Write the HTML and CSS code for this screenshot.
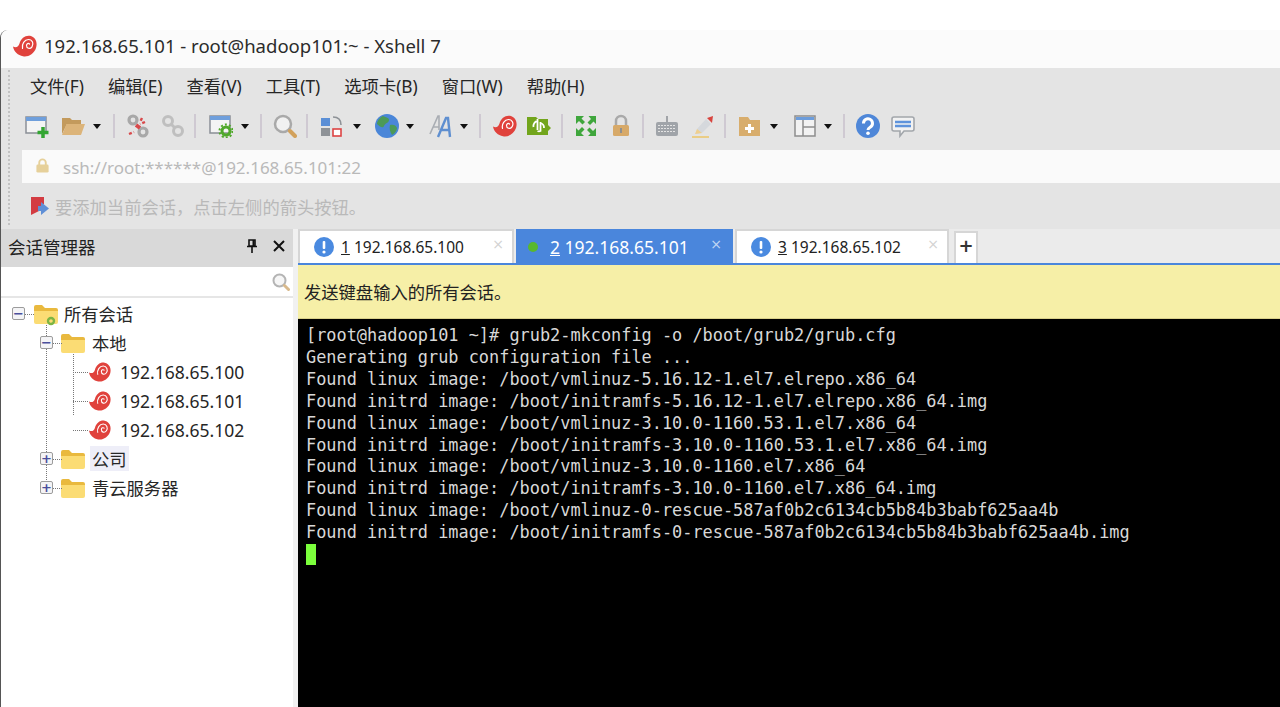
FILE: index.html
```html
<!DOCTYPE html>
<html lang="zh-CN">
<head>
<meta charset="utf-8">
<title>Xshell 7</title>
<link rel="stylesheet" href="styles.css">
</head>
<body>
<svg class="defs" width="0" height="0" aria-hidden="true">
  <defs>
    <symbol id="snail" viewBox="0 0 24 24">
      <path fill="#e0423c" d="M0 12.500C3 14 5.500 13 6.500 9.500C8 4 12.500 1 17 1.800C22.500 3 24.800 8.500 23 14C21 20 15 23.300 10 22.300C5 21.300 1 18 0 12.500Z"/>
      <path fill="none" stroke="#fff" stroke-width="1.200" stroke-linecap="round" d="M9.500 14.500C8.500 10 11.500 5.500 15.500 5.500C19.500 5.500 21 10 19 12.800C17 15.500 13.500 14.500 13.500 11.500C13.500 9.500 15.500 9 16.500 10"/>
    </symbol>
    <symbol id="folder" viewBox="0 0 24 20">
      <path fill="#e9b93e" d="M0 3a2 2 0 0 1 2-2h6l3 3h11a2 2 0 0 1 2 2v4H0Z"/>
      <path fill="#fbdc74" d="M0 7h24v11a2 2 0 0 1-2 2H2a2 2 0 0 1-2-2Z"/>
    </symbol>
    <symbol id="info" viewBox="0 0 20 20">
      <circle cx="10" cy="10" r="10" fill="#4a8ae0"/>
      <rect x="8.700" y="4" width="2.600" height="8" rx="1" fill="#fff"/>
      <circle cx="10" cy="15" r="1.600" fill="#fff"/>
    </symbol>
    <symbol id="caret" viewBox="0 0 8 5">
      <path fill="#111" d="M0 0h8L4 5Z"/>
    </symbol>
  </defs>
</svg>

<div class="top-gap"></div>
<div class="app">
  <header class="titlebar">
    <svg class="title-icon"><use href="#snail"/></svg>
    <span class="title-text">192.168.65.101 - root@hadoop101:~ - Xshell 7</span>
  </header>

  <div class="chrome">
    <nav class="menubar">
      <span>文件(F)</span><span>编辑(E)</span><span>查看(V)</span><span>工具(T)</span><span>选项卡(B)</span><span>窗口(W)</span><span>帮助(H)</span>
    </nav>

    <div class="toolbar">
      <svg class="ico" viewBox="0 0 24 24"><rect x="1" y="3" width="20" height="16" fill="#f4f4f4" stroke="#8a8f96" stroke-width="1.500"/><rect x="1" y="3" width="20" height="4" fill="#6f9fdc"/><path stroke="#33a532" stroke-width="3.500" d="M18 13v11M12.500 18.500h11"/></svg>
      <svg class="ico g12" viewBox="0 0 24 24"><path fill="#c39a5c" d="M1 4h8l2 2h9v4H6L1 20Z"/><path fill="#dcb479" d="M5.500 10H24l-4 11H1Z"/></svg>
      <svg class="car g8"><use href="#caret"/></svg>
      <i class="sep g12"></i>
      <svg class="ico g11" viewBox="0 0 24 24"><g fill="none" stroke="#a8a8a8" stroke-width="3.200"><circle cx="7" cy="6" r="4"/><circle cx="17" cy="18" r="4"/></g><path stroke="#d8484a" stroke-width="2.400" stroke-dasharray="3 2" d="M3 20l5-2M16 4l-2 4M19 8l-5 2"/><path stroke="#d8484a" stroke-width="4" d="M10 11l4 3"/></svg>
      <svg class="ico g11 dim" viewBox="0 0 24 24"><g fill="none" stroke="#a8a8a8" stroke-width="3"><circle cx="7" cy="7" r="4.500"/><circle cx="17" cy="17" r="4.500"/><path d="M10 10l4 4"/></g></svg>
      <i class="sep g9"></i>
      <svg class="ico g13" viewBox="0 0 24 24"><rect x="1" y="2" width="20" height="17" fill="#f4f4f4" stroke="#8a8f96" stroke-width="1.500"/><rect x="1" y="2" width="20" height="4" fill="#6f9fdc"/><circle cx="17" cy="17" r="4" fill="none" stroke="#4fa82a" stroke-width="3"/><circle cx="17" cy="17" r="6.500" fill="none" stroke="#4fa82a" stroke-width="2" stroke-dasharray="2 2.100"/></svg>
      <svg class="car g8"><use href="#caret"/></svg>
      <i class="sep g11"></i>
      <svg class="ico g11" viewBox="0 0 24 24"><circle cx="10" cy="10" r="8" fill="#f1f1f1" stroke="#a9a9a9" stroke-width="2.500"/><path stroke="#d2a15c" stroke-width="4" stroke-linecap="round" d="M17 17l5 5"/></svg>
      <i class="sep g9"></i>
      <svg class="ico g12" viewBox="0 0 24 24"><rect x="1" y="4" width="9" height="8" fill="#5b8fd6"/><rect x="1" y="14" width="9" height="8" fill="#8e9297"/><rect x="13" y="15" width="8" height="7" fill="#fff" stroke="#d44" stroke-width="1.600"/><path fill="none" stroke="#8e9297" stroke-width="1.600" d="M13 3c5 0 8 3 8 8"/></svg>
      <svg class="car g9"><use href="#caret"/></svg>
      <svg class="ico g14" viewBox="0 0 24 24"><circle cx="12" cy="12" r="12" fill="#4a86d8"/><path fill="#4c9a58" d="M8 2c3 2 6 1 6 4s-4 3-5 6-5 0-7-2c0-3 3-7 6-8ZM15 11c3-1 6 0 7 3 0 3-3 6-5 7-2-3-3-7-2-10Z"/></svg>
      <svg class="car g7"><use href="#caret"/></svg>
      <svg class="ico g15" viewBox="0 0 24 24"><path fill="none" stroke="#a9adb3" stroke-width="1.600" d="M1 20L9 2h1v14M4 13h6"/><path fill="none" stroke="#5f8fd0" stroke-width="2.400" d="M9 23L17 4h2l2 19M12 16h9"/></svg>
      <svg class="car g7"><use href="#caret"/></svg>
      <i class="sep g11"></i>
      <svg class="ico g12"><use href="#snail"/></svg>
      <svg class="ico g10" viewBox="0 0 24 24"><path fill="#72a51c" d="M0 3h9l2 2h10v6l3 3-3 3v4H0Z"/><path fill="none" stroke="#fff" stroke-width="1.800" d="M6.500 13a5 5 0 0 1 4-6M10.500 5v11M13.500 8v9a3.500 3.500 0 0 1-3 0M13.500 9a5 5 0 0 1 3.500 5"/></svg>
      <i class="sep g10"></i>
      <svg class="ico g11" viewBox="0 0 24 24"><path fill="#3fa63c" d="M2 2h8L7.500 4.500l3.500 3.500-2.500 2.500L5 7l-3 3ZM22 2v8l-2.500-2.500-3.500 3.500-2.500-2.500L17 5l-2.500-3ZM2 22v-8l2.500 2.500L8 13l2.500 2.500L7 19l3 3ZM22 22h-8l2.500-2.500L13 16l2.500-2.500L19 17l3-3Z"/></svg>
      <svg class="ico g11" viewBox="0 0 24 24"><path fill="none" stroke="#a9a9a9" stroke-width="2.500" d="M7 11V7a5 5 0 0 1 10 0v4"/><rect x="4" y="11" width="16" height="11" rx="1.500" fill="#d7a968"/><rect x="11" y="14" width="2" height="5" fill="#8f8f8f"/></svg>
      <i class="sep g9"></i>
      <svg class="ico g11" viewBox="0 0 24 24"><path stroke="#8b8f94" stroke-width="1.500" d="M12 2v6"/><rect x="1" y="8" width="22" height="14" rx="2" fill="#a0a4a9"/><path stroke="#e3e3e3" stroke-width="1" stroke-dasharray="2 1" d="M3 11.500h18M3 14.500h18M3 17.500h18"/></svg>
      <svg class="ico g12" viewBox="0 0 24 24"><path fill="#d5d8dc" d="M6 15L15 5l5 5-9 9-6 1Z"/><path fill="#d8453f" d="M16 4l6-2-1 7Z"/><path fill="#efcf8e" d="M6 15l5 4-7 1Z"/><path stroke="#ecc667" stroke-width="1.500" d="M1 23h17"/></svg>
      <i class="sep g9"></i>
      <svg class="ico g12" viewBox="0 0 24 24"><path fill="#d8ad6c" d="M1 3h9l2 3h10v16H1Z"/><path stroke="#fff" stroke-width="3" d="M11.500 10v9M7 14.500h9"/></svg>
      <svg class="car g8"><use href="#caret"/></svg>
      <svg class="ico g15" viewBox="0 0 24 24"><rect x="2" y="2" width="20" height="20" fill="#f2f2f2" stroke="#8d8d8d" stroke-width="1.500"/><rect x="3" y="3" width="18" height="3" fill="#6c9ddc"/><path stroke="#8d8d8d" stroke-width="1.500" d="M10 6v16M10 13h12"/></svg>
      <svg class="car g7"><use href="#caret"/></svg>
      <i class="sep g11"></i>
      <svg class="ico g11" viewBox="0 0 24 24"><circle cx="12" cy="12" r="12" fill="#4f87d8"/><path fill="none" stroke="#fff" stroke-width="3" d="M7.500 9.500a4.500 4.500 0 1 1 7 3.500c-1.500 1-2.500 1.500-2.500 3"/><circle cx="12" cy="19.300" r="1.800" fill="#fff"/></svg>
      <svg class="ico g11" viewBox="0 0 24 24"><path fill="#f2f2f2" stroke="#a2a6ab" stroke-width="1.600" d="M3 3h18a2 2 0 0 1 2 2v10a2 2 0 0 1-2 2h-8l-4 5v-5H3a2 2 0 0 1-2-2V5a2 2 0 0 1 2-2Z"/><path stroke="#5e93dc" stroke-width="2.400" d="M4 8h16M4 12h16"/></svg>
    </div>

    <div class="addressbar">
      <svg class="addr-lock" viewBox="0 0 16 16"><path fill="none" stroke="#e6d09a" stroke-width="2" d="M4.500 8V5a3.500 3.500 0 0 1 7 0v3"/><rect x="1.500" y="7" width="13" height="8.500" rx="1.500" fill="#e6d09a"/></svg>
      <span>ssh://root:******@192.168.65.101:22</span>
    </div>

    <div class="infobar">
      <svg class="info-flag" viewBox="0 0 20 20"><path fill="#d33c42" d="M1 1h13v7l-5 3v4l-8 4Z"/><path fill="#5f8fd6" d="M8 10h3V6l8 6.500-8 6.500v-4H8Z"/></svg>
      <span>要添加当前会话，点击左侧的箭头按钮。</span>
    </div>
  </div>

  <div class="workspace">
    <aside class="sidebar">
      <div class="side-head">
        <span class="side-title">会话管理器</span>
        <svg class="side-pin" viewBox="0 0 12 14"><path fill="none" stroke="#111" stroke-width="1.600" d="M3 1h6v6H3ZM1 7.500h10M6 8v6"/><path stroke="#111" stroke-width="2" d="M7.500 1v6"/></svg>
        <svg class="side-close" viewBox="0 0 12 12"><path stroke="#111" stroke-width="2" d="M1 1l10 10M11 1L1 11"/></svg>
      </div>
      <div class="side-search">
        <svg class="search-ico" viewBox="0 0 18 18"><circle cx="7.500" cy="7.500" r="6" fill="#f6f6f6" stroke="#b4b4b4" stroke-width="2"/><path stroke="#d8b98c" stroke-width="3" stroke-linecap="round" d="M12.500 12.500l4 4"/></svg>
      </div>
      <div class="tree">
        <i class="line v v-one"></i>
        <i class="line v v-two"></i>
        <div class="node lvl0">
          <b class="tog">−</b><i class="line h h-tog"></i>
          <svg class="folder"><use href="#folder"/></svg>
          <svg class="gear" viewBox="0 0 10 10"><circle cx="5" cy="5" r="3" fill="none" stroke="#7cb544" stroke-width="2.400"/></svg>
          <span class="label">所有会话</span>
        </div>
        <div class="node lvl1">
          <b class="tog">−</b><i class="line h h-tog"></i>
          <svg class="folder"><use href="#folder"/></svg><span class="label">本地</span>
        </div>
        <div class="node lvl2"><i class="line h h-leaf"></i><svg class="snail"><use href="#snail"/></svg><span class="label">192.168.65.100</span></div>
        <div class="node lvl2"><i class="line h h-leaf"></i><svg class="snail"><use href="#snail"/></svg><span class="label">192.168.65.101</span></div>
        <div class="node lvl2"><i class="line h h-leaf"></i><svg class="snail"><use href="#snail"/></svg><span class="label">192.168.65.102</span></div>
        <div class="node lvl1">
          <b class="tog">+</b><i class="line h h-tog"></i>
          <svg class="folder"><use href="#folder"/></svg><span class="label hl">公司</span>
        </div>
        <div class="node lvl1">
          <b class="tog">+</b><i class="line h h-tog"></i>
          <svg class="folder"><use href="#folder"/></svg><span class="label">青云服务器</span>
        </div>
      </div>
    </aside>

    <main class="content">
      <div class="tabstrip">
        <div class="tab tab-first">
          <svg class="tab-info"><use href="#info"/></svg>
          <span class="tab-label"><u>1</u> 192.168.65.100</span>
          <span class="tab-x">×</span>
        </div>
        <div class="tab tab-active">
          <i class="tab-dot"></i>
          <span class="tab-label"><u>2</u> 192.168.65.101</span>
          <span class="tab-x">×</span>
        </div>
        <div class="tab tab-third">
          <svg class="tab-info"><use href="#info"/></svg>
          <span class="tab-label"><u>3</u> 192.168.65.102</span>
          <span class="tab-x">×</span>
        </div>
        <div class="tab-add">+</div>
      </div>
      <div class="notice">发送键盘输入的所有会话。</div>
      <pre class="terminal">[root@hadoop101 ~]# grub2-mkconfig -o /boot/grub2/grub.cfg
Generating grub configuration file ...
Found linux image: /boot/vmlinuz-5.16.12-1.el7.elrepo.x86_64
Found initrd image: /boot/initramfs-5.16.12-1.el7.elrepo.x86_64.img
Found linux image: /boot/vmlinuz-3.10.0-1160.53.1.el7.x86_64
Found initrd image: /boot/initramfs-3.10.0-1160.53.1.el7.x86_64.img
Found linux image: /boot/vmlinuz-3.10.0-1160.el7.x86_64
Found initrd image: /boot/initramfs-3.10.0-1160.el7.x86_64.img
Found linux image: /boot/vmlinuz-0-rescue-587af0b2c6134cb5b84b3babf625aa4b
Found initrd image: /boot/initramfs-0-rescue-587af0b2c6134cb5b84b3babf625aa4b.img
<span class="cursor"></span></pre>
    </main>
  </div>
</div>
</body>
</html>
```
FILE: styles.css
```css
* { box-sizing: border-box; }
html, body { margin: 0; height: 100%; overflow: hidden; }
body {
  background: #fff;
  color: #222;
  font-family: "Noto Sans", "Noto Sans CJK SC", sans-serif;
  display: flex;
  flex-direction: column;
}
.defs { position: absolute; }
.top-gap { height: 30px; flex: none; }
.app {
  flex: 1;
  min-height: 0;
  display: flex;
  flex-direction: column;
  border-left: 1px solid #555;
  border-top-left-radius: 8px;
}

.titlebar {
  height: 38px;
  flex: none;
  display: flex;
  align-items: center;
  padding: 0 0 7px 12px;
  background: #fbfbfb;
  border-top-left-radius: 8px;
}
.title-icon { width: 24px; height: 24px; margin-right: 7px; }
.title-text { font-size: 18.550px; color: #2b2b2b; }

.chrome { position: relative; background: #e4e4e4; flex: none; }
.chrome::before {
  content: "";
  position: absolute;
  left: 7px;
  top: 2px;
  bottom: 4px;
  border-left: 2px dotted #c2c2c2;
}
.menubar {
  height: 37px;
  display: flex;
  align-items: center;
  gap: 24px;
  padding: 0 0 2px 29px;
  font-size: 17.300px;
  color: #262626;
}
.toolbar {
  height: 45px;
  display: flex;
  align-items: center;
  padding: 0 0 3px 24px;
}
.ico { width: 24px; height: 24px; flex: none; }
.car { width: 8px; height: 5px; flex: none; }
.sep { width: 2px; height: 24px; background: #cfc9d2; flex: none; }
.dim { opacity: .6; }
.g7 { margin-left: 7px; }
.g8 { margin-left: 8px; }
.g9 { margin-left: 9px; }
.g10 { margin-left: 10px; }
.g11 { margin-left: 11px; }
.g12 { margin-left: 12px; }
.g13 { margin-left: 13px; }
.g14 { margin-left: 14px; }
.g15 { margin-left: 15px; }

.addressbar {
  height: 33px;
  margin-left: 21px;
  background: #fafafa;
  display: flex;
  align-items: center;
  padding: 2px 0 0 13px;
  font-size: 17px;
  color: #b9b9b9;
}
.addr-lock { width: 15px; height: 15px; margin-right: 13px; margin-top: -5px; }
.infobar {
  height: 46px;
  display: flex;
  align-items: center;
  padding-left: 29px;
  font-size: 17.300px;
  color: #b9b9b9;
}
.info-flag { width: 20px; height: 20px; margin-right: 5px; }

.workspace { flex: 1; min-height: 0; display: flex; background: #f1f1f1; }
.sidebar {
  width: 292px;
  flex: none;
  background: #fff;
  display: flex;
  flex-direction: column;
}
.side-head {
  height: 38px;
  flex: none;
  display: flex;
  align-items: center;
  background: #d9d9d9;
  padding: 0 0 4px 7px;
  font-size: 17.500px;
  color: #222;
}
.side-title { flex: 1; }
.side-pin { width: 12px; height: 14px; margin-right: 15px; }
.side-close { width: 12px; height: 12px; margin-right: 8px; }
.side-search {
  height: 31px;
  flex: none;
  display: flex;
  align-items: center;
  justify-content: flex-end;
  padding-right: 3px;
  border-bottom: 2px solid #e6e6e6;
}
.search-ico { width: 18px; height: 18px; }

.tree { position: relative; padding-top: 1px; font-size: 17.300px; }
.node { position: relative; height: 29px; display: flex; align-items: center; color: #262626; }
.lvl0 { padding-left: 11px; }
.lvl1 { padding-left: 39px; }
.lvl2 { padding-left: 87px; font-size: 17.500px; }
.tog {
  width: 13px;
  height: 13px;
  flex: none;
  display: flex;
  align-items: center;
  justify-content: center;
  border: 1px solid #9c9c9c;
  border-radius: 2px;
  background: #f4f4f6;
  font: 700 13px/1 "DejaVu Sans", sans-serif;
  color: #4a4f9c;
}
.folder { width: 24px; height: 20px; margin-left: 8px; flex: none; }
.lvl0 .folder { margin-left: 9px; }
.snail { width: 24px; height: 22px; flex: none; }
.label { margin-left: 8px; }
.lvl1 .label { margin-left: 7px; }
.lvl0 .label { margin-left: 6px; }
.lvl1 .hl { background: #eeeef8; padding: 0 2px; margin-left: 5px; }
.gear { position: absolute; left: 45px; top: 17px; width: 10px; height: 10px; }
.line { position: absolute; display: block; }
.v { border-left: 1px dotted #777; }
.h { border-top: 1px dotted #777; top: 50%; }
.v-one { left: 45px; top: 16px; height: 174px; }
.v-two { left: 72px; top: 45px; height: 72px; }
.h-tog { left: 24px; width: 9px; }
.lvl1 .h-tog { left: 52px; width: 9px; }
.h-leaf { left: 72px; width: 15px; }

.content { flex: 1; min-width: 0; margin-left: 5px; display: flex; flex-direction: column; }
.tabstrip {
  height: 36px;
  flex: none;
  display: flex;
  align-items: flex-end;
  gap: 2px;
  background: #ebebeb;
  border-bottom: 2px solid #4a86dc;
  padding-left: 0;
}
.tab {
  height: 34px;
  width: 216px;
  flex: none;
  display: flex;
  align-items: center;
  background: #fff;
  border: 2px solid #d6d6d6;
  border-bottom: 0;
  font-size: 15.500px;
  color: #222;
  position: relative;
}
.tab-first { padding-left: 14px; }
.tab-third { padding-left: 14px; width: 214px; }
.tab-active {
  width: 217px;
  padding-left: 10px;
  background: #4a86dc;
  border-color: #4a86dc;
  color: #fff;
  font-size: 17.500px;
}
.tab-info { width: 20px; height: 20px; margin-right: 7px; flex: none; }
.tab-dot { width: 10px; height: 10px; border-radius: 50%; background: #58b82e; margin-right: 12px; flex: none; }
.tab-x { position: absolute; right: 8px; top: 1px; font: 400 14px/24px "DejaVu Sans", sans-serif; color: #d2d2d2; }
.tab-active .tab-x { color: #c3d7f3; right: 9px; }
.tab-add {
  width: 24px;
  height: 32px;
  margin-left: 3px;
  padding-bottom: 4px;
  flex: none;
  display: flex;
  align-items: center;
  justify-content: center;
  background: #fff;
  border: 2px solid #d6d6d6;
  border-bottom: 0;
  font: 700 18px/1 "DejaVu Sans", sans-serif;
  color: #333;
}
.notice {
  height: 54px;
  flex: none;
  display: flex;
  align-items: center;
  padding-left: 6px;
  background: #f6efa7;
  font-size: 17.300px;
  color: #222;
  border-bottom: 1px solid #d9d08a;
}
.terminal {
  flex: 1;
  min-height: 0;
  margin: 0;
  padding: 6px 0 0 8px;
  background: #000;
  color: #d8d8d8;
  font: 16.900px/21.900px "DejaVu Sans Mono", monospace;
  overflow: hidden;
}
.cursor { display: inline-block; width: 10px; height: 21px; background: #7cff3c; vertical-align: top; }
```
